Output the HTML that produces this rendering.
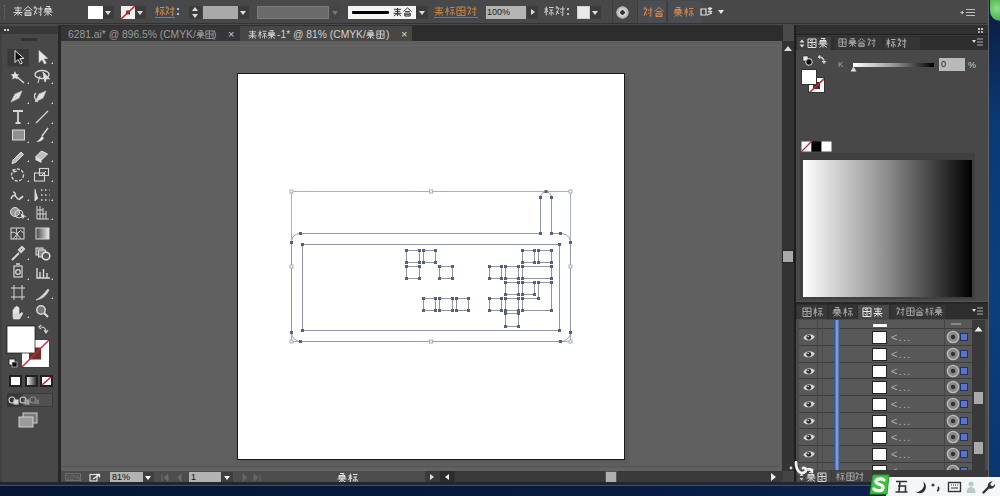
<!DOCTYPE html>
<html><head><meta charset="utf-8">
<style>
*{margin:0;padding:0;box-sizing:border-box}
html,body{width:1000px;height:496px;overflow:hidden;background:#4a4a4a;font-family:"Liberation Sans",sans-serif}
.a{position:absolute}
svg{display:block}
#top{left:0;top:0;width:987px;height:24px;background:#484848;border-bottom:1px solid #333}
#desk{left:988px;top:0;width:12px;height:496px;background:linear-gradient(90deg,#5d6570 0,#5d6570 1px,transparent 1px),linear-gradient(180deg,#0a1a3c 0,#0b2550 40px,#0a3a74 120px,#0b3f7c 300px,#0a3670 480px)}
#tools{left:0;top:25px;width:58px;height:459px;background:#484848;border-left:2px solid #404040}
#toolsep{left:58px;top:25px;width:3px;height:459px;background:#282828}
#tabs{left:61px;top:25px;width:722px;height:16px;background:#2f2f2f}
#canvas{left:61px;top:41px;width:721px;height:430px;background:#5f5f5f}
#vscroll{left:782px;top:41px;width:12px;height:430px;background:#333}
#rsep{left:794px;top:25px;width:2px;height:459px;background:#1f1f1f}
#rpanel{left:796px;top:25px;width:192px;height:459px;background:#535353}
#status{left:61px;top:471px;width:722px;height:13px;background:#3b3b3b}
#taskbar{left:0;top:484px;width:988px;height:12px;background:#0b1e3c}
#artboard{left:237px;top:73px;width:388px;height:387px;background:#fff;border:1px solid #1a1a1a;box-shadow:4px 3px 0 0 #5a5a5a}
.btn{background:#3c3c3c}
.tri{width:0;height:0;border-left:3px solid transparent;border-right:3px solid transparent;border-top:4px solid #ddd}
.txt{color:#cfcfcf;font-size:11px;line-height:12px;white-space:nowrap}
</style></head><body>
<svg width="0" height="0" style="position:absolute">
 <defs>
  <symbol id="g1" viewBox="0 0 10 10"><path d="M1 2h8M2 4.3h6M0.5 6.5h9M5 0.5v9M4.5 6.8L1 9.5M5.5 6.8L9 9.5" stroke="currentColor" stroke-width="1" fill="none"/></symbol>
  <symbol id="g2" viewBox="0 0 10 10"><path d="M0.5 3h3.5M2.3 0.5v9M2.2 3.5L0.5 7M2.5 4l1.5 2M5 1.5h4.5M5.5 4h3.5M7.2 4v5.5M6 6l-1 2.5M8.5 6l1 2.5" stroke="currentColor" stroke-width="1" fill="none"/></symbol>
  <symbol id="g3" viewBox="0 0 10 10"><path d="M5 0.5L0.5 4.5M5 0.5l4.5 4M2.5 4.5h5M2 6.2h6v3.3H2zM2 8h6" stroke="currentColor" stroke-width="1" fill="none"/></symbol>
  <symbol id="g4" viewBox="0 0 10 10"><path d="M0.5 2h3.5L1 9M1.5 5l2.5 3M5 3h4.5M7.8 0.5v9l-1.2-.8M5.5 5.5l1 1.5M1 0.5l2 1" stroke="currentColor" stroke-width="1" fill="none"/></symbol>
  <symbol id="g5" viewBox="0 0 10 10"><path d="M3 0.5h4L5.5 2M2 2.5h6v2.5H2zM0.5 6h9M5 5v4.5M1.5 9.5L4.5 7M5.5 7l3.5 2.5M2 3.7h6" stroke="currentColor" stroke-width="1" fill="none"/></symbol>
  <symbol id="g6" viewBox="0 0 10 10"><path d="M1 1h8v8.5H1zM1 4.5h8M5 1v8.5M3 2.5h1M6.5 6.5h1.5M2.5 7l1.5 1" stroke="currentColor" stroke-width="1" fill="none"/></symbol>
 </defs>
</svg>

<!-- ===== TOP CONTROL BAR ===== -->
<div id="top" class="a"></div>
<div id="desk" class="a"></div>
<div class="a" style="left:990px;top:0;width:10px;height:21px;border-radius:0 0 0 10px;background:radial-gradient(circle at 70% 40%,#8be08b,#3caa3c)"></div>
<div id="toparea" class="a" style="left:0;top:0;width:986px;height:24px">
 <div class="a" style="left:4px;top:5px;width:2px;height:14px;border-left:1px dotted #6a6a6a"></div>
 <div class="a" style="left:13px;top:6px;color:#d4d4d4;width:40px;height:10px">
  <svg class="a" style="left:0;top:0" width="10" height="10"><use href="#g1"/></svg>
  <svg class="a" style="left:10px;top:0" width="10" height="10"><use href="#g3"/></svg>
  <svg class="a" style="left:20px;top:0" width="10" height="10"><use href="#g4"/></svg>
  <svg class="a" style="left:30px;top:0" width="10" height="10"><use href="#g5"/></svg>
 </div>
 <!-- fill swatch -->
 <div class="a" style="left:88px;top:6px;width:15px;height:13px;background:#fff"></div>
 <div class="a btn" style="left:103px;top:6px;width:11px;height:13px"><div class="a tri" style="left:2px;top:5px"></div></div>
 <!-- stroke swatch -->
 <div class="a" style="left:121px;top:6px;width:14px;height:13px;background:#f5eeee;overflow:hidden">
  <svg width="14" height="13"><path d="M0 13L14 0" stroke="#c22" stroke-width="1.5"/><rect x="5" y="4.5" width="4" height="4" fill="#7a3a3a"/></svg>
 </div>
 <div class="a btn" style="left:135px;top:6px;width:11px;height:13px"><div class="a tri" style="left:2px;top:5px"></div></div>
 <!-- stroke label -->
 <div class="a" style="left:150px;top:1px;width:36px;height:22px;background:#45484d"></div>
 <div class="a" style="left:155px;top:6px;color:#d08a4a;width:30px;height:11px">
  <svg class="a" style="left:0;top:0" width="10" height="10"><use href="#g2"/></svg>
  <svg class="a" style="left:10px;top:0" width="10" height="10"><use href="#g4"/></svg>
  <div class="a" style="left:22px;top:2px;width:2px;height:2px;background:#bbb"></div>
  <div class="a" style="left:22px;top:7px;width:2px;height:2px;background:#bbb"></div>
  <div class="a" style="left:0;top:11px;width:20px;height:1px;background:#b07040"></div>
 </div>
 <div class="a btn" style="left:189px;top:6px;width:13px;height:13px">
  <div class="a" style="left:3px;top:1px;width:0;height:0;border-left:3px solid transparent;border-right:3px solid transparent;border-bottom:4px solid #ddd"></div>
  <div class="a" style="left:3px;top:8px;width:0;height:0;border-left:3px solid transparent;border-right:3px solid transparent;border-top:4px solid #ddd"></div>
 </div>
 <div class="a" style="left:203px;top:6px;width:35px;height:13px;background:#a9a9a9"></div>
 <div class="a btn" style="left:238px;top:6px;width:11px;height:13px"><div class="a tri" style="left:2px;top:5px"></div></div>
 <!-- disabled profile box -->
 <div class="a" style="left:257px;top:6px;width:72px;height:13px;background:#6a6a6a;border:1px solid #7a7a7a"></div>
 <div class="a" style="left:330px;top:6px;width:10px;height:13px;background:#444"><div class="a" style="left:2px;top:5px;width:0;height:0;border-left:3px solid transparent;border-right:3px solid transparent;border-top:4px solid #777"></div></div>
 <!-- stroke style -->
 <div class="a" style="left:348px;top:6px;width:68px;height:13px;background:#f4f4f4">
  <div class="a" style="left:4px;top:5px;width:37px;height:3px;background:#000;border-radius:1px"></div>
  <div class="a" style="left:45px;top:1px;color:#222;width:20px;height:10px">
   <svg class="a" style="left:0;top:0" width="9" height="10"><use href="#g1"/></svg>
   <svg class="a" style="left:10px;top:0" width="9" height="10"><use href="#g3"/></svg>
  </div>
 </div>
 <div class="a btn" style="left:416px;top:6px;width:12px;height:13px"><div class="a tri" style="left:3px;top:5px"></div></div>
 <!-- opacity -->
 <div class="a" style="left:431px;top:1px;width:50px;height:22px;background:#45484d"></div>
 <div class="a" style="left:434px;top:6px;color:#c9803e;width:48px;height:12px">
  <svg class="a" style="left:0;top:0" width="10" height="10"><use href="#g1"/></svg>
  <svg class="a" style="left:11px;top:0" width="10" height="10"><use href="#g2"/></svg>
  <svg class="a" style="left:22px;top:0" width="10" height="10"><use href="#g6"/></svg>
  <svg class="a" style="left:33px;top:0" width="10" height="10"><use href="#g4"/></svg>
  <div class="a" style="left:0;top:11px;width:44px;height:1px;background:#a86a3a"></div>
 </div>
 <div class="a" style="left:486px;top:6px;width:40px;height:13px;background:#b4b4b4;color:#222;font-size:9px;line-height:13px;padding-left:1px">100%</div>
 <div class="a btn" style="left:527px;top:6px;width:11px;height:13px"><div class="a" style="left:4px;top:3px;width:0;height:0;border-top:3.5px solid transparent;border-bottom:3.5px solid transparent;border-left:4px solid #ddd"></div></div>
 <div class="a" style="left:544px;top:6px;color:#cfcfcf;width:30px;height:10px">
  <svg class="a" style="left:0;top:0" width="10" height="10"><use href="#g2"/></svg>
  <svg class="a" style="left:11px;top:0" width="10" height="10"><use href="#g4"/></svg>
  <div class="a" style="left:23px;top:2px;width:2px;height:2px;background:#bbb"></div>
  <div class="a" style="left:23px;top:7px;width:2px;height:2px;background:#bbb"></div>
 </div>
 <div class="a" style="left:577px;top:6px;width:13px;height:13px;background:#e8e8e8;border:1px solid #cfcfcf"></div>
 <div class="a btn" style="left:590px;top:6px;width:11px;height:13px"><div class="a tri" style="left:2px;top:5px"></div></div>
 <!-- globe -->
 <div class="a" style="left:616px;top:6px;width:13px;height:13px;border-radius:50%;background:radial-gradient(circle at 50% 50%,#333 0,#333 2px,#ddd 2.5px,#aaa 6px,#555 6.5px)"></div>
 <div class="a" style="left:612px;top:1px;width:1px;height:22px;background:#3c3c3c"></div><div class="a" style="left:637px;top:1px;width:1px;height:22px;background:#3c3c3c"></div><div class="a" style="left:638px;top:1px;width:28px;height:22px;background:#4a4d52"></div>
 <div class="a" style="left:666px;top:1px;width:2px;height:22px;background:#3e3e3e"></div><div class="a" style="left:668px;top:1px;width:34px;height:22px;background:#4a4d52"></div>
 <div class="a" style="left:643px;top:7px;color:#d4874a;width:22px;height:10px">
  <svg class="a" style="left:0;top:0" width="10" height="10"><use href="#g4"/></svg>
  <svg class="a" style="left:11px;top:0" width="10" height="10"><use href="#g3"/></svg>
 </div>
 <div class="a" style="left:673px;top:7px;color:#d4874a;width:22px;height:10px">
  <svg class="a" style="left:0;top:0" width="10" height="10"><use href="#g5"/></svg>
  <svg class="a" style="left:11px;top:0" width="10" height="10"><use href="#g2"/></svg>
 </div>
 <svg class="a" style="left:700px;top:6px" width="14" height="12"><path d="M1 3h5v6H1zM8 2l4 4M12 2l-4 4M10 1v6M7 9l5-2" stroke="#e0e0e0" stroke-width="1.2" fill="none"/></svg>
 <div class="a tri" style="left:718px;top:10px;border-top-color:#e6e6e6"></div>
 <!-- panel menu icon -->
 <svg class="a" style="left:960px;top:8px" width="16" height="9"><path d="M1 4.5h3M6 1.5h9M6 4.5h9M6 7.5h9" stroke="#bdbdbd" stroke-width="1"/><path d="M0 4.5l3-2v4z" fill="#bdbdbd"/></svg>
</div>

<!-- ===== TOOLS ===== -->
<div id="tools" class="a"></div>
<div id="toolsep" class="a"></div>
<svg class="a" style="left:0;top:25px" width="58" height="459" viewBox="0 25 58 459">
 <rect x="0" y="26" width="58" height="8" fill="#383838"/>
 <path d="M4 30h2M7 30h2" stroke="#cfcfcf" stroke-width="2"/>
 <rect x="21" y="38" width="16" height="3" fill="#333"/>
 <g fill="none" stroke="#d6d6d6" stroke-width="1.2">
 <!-- row1 -->
 <rect x="7.5" y="49" width="21.5" height="17.5" fill="#393939" stroke="none"/>
 <path d="M15 50.5v12l3-3 2.5 4.5 1.8-1-2.5-4.3 4-.3z" fill="#111" stroke="#e6e6e6" stroke-width="1"/>
 <path d="M39 50.5v12l3-3 2.5 4.5 1.8-1-2.5-4.3 4-.3z" fill="#e8e8e8" stroke="#cfcfcf" stroke-width=".6"/>
 <!-- row2 wand / lasso -->
 <path d="M16 76l8 7" stroke-width="1.6"/>
 <path d="M15 71l1.2 3 3 .5-2.2 2 .6 3-2.6-1.5-2.7 1.5.6-3-2.2-2 3-.5z" fill="#e0e0e0" stroke="none"/>
 <ellipse cx="42" cy="74.5" rx="7" ry="4" stroke-width="1.4"/>
 <path d="M40 76l-2 7M43 72l2 10 1.5-3.5 3 .5z" fill="#ddd" stroke-width="1"/>
 <!-- row3 pen -->
 <path d="M11 102l4-8 7-3-3 7-8 4zM15 98l2-2" fill="#e0e0e0" stroke="#bdbdbd" stroke-width=".8"/>
 <path d="M35 102l4-8 7-3-3 7-8 4z" fill="#e0e0e0" stroke="#bdbdbd" stroke-width=".8"/>
 <path d="M36 93c-3 2-1 8 2 9" stroke-width="1.2"/>
 <!-- row4 T / line -->
 <path d="M13 111h10M18 111v12M15.5 123h5" stroke-width="1.8"/>
 <path d="M36 123l12-12" stroke-width="1.2"/>
 <!-- row5 rect / brush -->
 <rect x="12.5" y="130" width="12" height="10" fill="#8f8f8f" stroke="#d8d8d8" stroke-width="1"/>
 <path d="M48 128l-6 8" stroke-width="1.4"/>
 <path d="M36 142c2-1 4-3 6-6l2 2c-2 3-5 4-8 4z" fill="#e6e6e6" stroke="none"/>
 <!-- row6 pencil / eraser -->
 <path d="M13 160l8-8 2.5 2.5-8 8-3.5 1z" fill="#bbb" stroke="#e0e0e0" stroke-width="1"/>
 <path d="M35.5 157l6-6 6 3-6 6z" fill="#bdbdbd" stroke="#e6e6e6" stroke-width="1"/>
 <path d="M35.5 157v3l6 3v-3z" fill="#e0e0e0" stroke="none"/>
 <!-- row7 rotate / scale -->
 <circle cx="17.5" cy="175" r="6" stroke-width="1.3" stroke-dasharray="3 1.5"/>
 <path d="M13 169l1 3 3-1" stroke-width="1.2"/>
 <rect x="34.5" y="173" width="10" height="8" stroke-width="1.1"/>
 <rect x="39.5" y="168.5" width="9" height="7" stroke-width="1.1"/>
 <path d="M42 175l4-4" stroke-width="1"/>
 <!-- row8 warp / free transform -->
 <path d="M11 199c2-6 5-3 6-1s3 2 6-2M13 192c2 0 3 2 2 4M19 200c1-2 3-3 4-3" stroke-width="1.5"/>
 <path d="M35 189v12l3-3" fill="#ddd" stroke-width="1"/>
 <path d="M41 190h1.5M45 190h1.5M49 190h.5M41 195h1.5M45 195h1.5M49 195h.5M41 200h1.5M45 200h1.5M49 200h.5" stroke-width="1.6"/>
 <!-- row9 shape builder / perspective -->
 <circle cx="15" cy="212" r="4.5" fill="#999" stroke="#ddd" stroke-width="1"/>
 <circle cx="19" cy="214" r="4" stroke-width="1"/>
 <path d="M20 213l3 6 1.5-2.5 2.5.5z" fill="#ddd" stroke="none"/>
 <path d="M37 206v13h12M40 206v13M43 208v11M46 211v8M37 210h6M37 214h9" stroke-width="1"/>
 <!-- row10 mesh / gradient -->
 <rect x="11" y="228" width="13" height="11" stroke-width="1"/>
 <path d="M11 233c3-3 5 3 8-1s3 2 5 1M17 228c-2 3 2 6-1 11M13 239l4-5 4 5" stroke-width="1"/>
 <defs><linearGradient id="tg1" x1="0" x2="1"><stop offset="0" stop-color="#444"/><stop offset="1" stop-color="#eee"/></linearGradient></defs>
 <rect x="36" y="228" width="13" height="11" fill="url(#tg1)" stroke="#d6d6d6" stroke-width="1"/>
 <!-- row11 eyedropper / blend -->
 <path d="M12 260l7-7M19 250l3-3 2 2-3 3z" stroke-width="2"/>
 <rect x="36" y="248" width="7" height="7" fill="#777" stroke="#ddd" stroke-width="1"/>
 <rect x="38.5" y="250" width="7" height="7" fill="#888" stroke="#ddd" stroke-width="1"/>
 <circle cx="46" cy="256" r="3.8" fill="#555" stroke="#e6e6e6" stroke-width="1.5"/>
 <!-- row12 symbol sprayer / graph -->
 <rect x="14" y="266" width="8" height="11" stroke-width="1.2"/>
 <circle cx="18" cy="272" r="2.3" stroke-width="1.2"/>
 <path d="M16 264h4" stroke-width="1.5"/>
 <path d="M37 268v10h13M40 278v-6M43.5 278v-9M47 278v-5" stroke-width="1.4"/>
 <!-- row13 artboard / slice -->
 <path d="M11 288h14M11 297h14M14 285v15M22 285v15" stroke-width="1"/>
 <path d="M36 300c4-2 8-6 12-11l1 1c-3 6-7 9-13 10z" fill="#ddd" stroke="#ccc" stroke-width=".8"/>
 <!-- row14 hand / zoom -->
 <path d="M13 316v-6c0-1 1.5-1 1.5 0v3-5c0-1 1.5-1 1.5 0v5-6c0-1 1.5-1 1.5 0v6-5c0-1 1.5-1 1.5 0v7l2-2c1-1 2 0 1.5 1l-3 5h-6z" fill="#d6d6d6" stroke="#eee" stroke-width=".6"/>
 <circle cx="41" cy="310" r="4.2" fill="#777" stroke="#d6d6d6" stroke-width="1.5"/>
 <path d="M44 313l4 4" stroke-width="2.2"/>
 </g>
 <!-- flyout indicators -->
 <g fill="#cfcfcf">
  <path d="M51 64l2-2v2z"/><path d="M27 84l2-2v2z"/><path d="M51 84l2-2v2z"/>
  <path d="M27 104l2-2v2z"/><path d="M51 104l2-2v2z"/>
  <path d="M27 124l2-2v2z"/><path d="M51 124l2-2v2z"/>
  <path d="M27 143l2-2v2z"/><path d="M51 143l2-2v2z"/>
  <path d="M27 162l2-2v2z"/><path d="M51 162l2-2v2z"/>
  <path d="M27 182l2-2v2z"/><path d="M51 182l2-2v2z"/>
  <path d="M27 201l2-2v2z"/><path d="M51 201l2-2v2z"/>
  <path d="M27 220l2-2v2z"/><path d="M51 220l2-2v2z"/>
  <path d="M27 260l2-2v2z"/>
  <path d="M27 280l2-2v2z"/><path d="M51 280l2-2v2z"/>
  <path d="M51 299l2-2v2z"/>
  <path d="M27 318l2-2v2z"/>
 </g>
 <!-- fill / stroke -->
 <rect x="7" y="326" width="28" height="27" fill="#fff" stroke="#2a2a2a" stroke-width=".8"/>
 <rect x="21.5" y="339.5" width="28" height="28" fill="#fff" stroke="#2a2a2a" stroke-width=".8"/>
 <rect x="29" y="347.5" width="12" height="12" fill="#6e2e2a"/>
 <path d="M22 367l27-27" stroke="#c8283a" stroke-width="1.5"/>
 <rect x="7" y="326" width="28" height="27" fill="#fff" stroke="#2a2a2a" stroke-width=".8"/>
 <path d="M41 327c3 0 5 2 5 5M44 330l2 3 2-3M41 325l-2 2 2 2" stroke="#d6d6d6" stroke-width="1.1" fill="none"/>
 <rect x="9" y="359" width="6" height="6" fill="#eee" stroke="#222" stroke-width=".8"/>
 <rect x="12" y="362" width="5" height="5" fill="#111" stroke="#ddd" stroke-width=".6"/>
 <!-- modes -->
 <rect x="9" y="375" width="13" height="12" fill="#222"/>
 <rect x="11" y="377" width="9" height="8" fill="#fff"/>
 <rect x="25" y="375" width="13" height="12" fill="#222"/>
 <defs><linearGradient id="tg2" x1="0" x2="1"><stop offset="0" stop-color="#f0f0f0"/><stop offset="1" stop-color="#333"/></linearGradient></defs><rect x="27" y="377" width="9" height="8" fill="url(#tg2)"/>
 <rect x="40" y="375" width="13" height="12" fill="#222"/>
 <rect x="42" y="377" width="9" height="8" fill="#fff"/>
 <path d="M42 385l9-8" stroke="#d0283a" stroke-width="1.6"/>
 <rect x="7" y="393" width="46" height="14" fill="#3a3a3a"/><rect x="23" y="394" width="29" height="12" fill="#505050"/>
 <rect x="7" y="394" width="9" height="13" fill="#353535"/>
 <g fill="none" stroke="#cfcfcf" stroke-width="1.1">
  <circle cx="12" cy="400" r="3"/><rect x="14" y="400" width="4" height="4" fill="#ddd"/>
  <circle cx="23" cy="400" r="3"/><rect x="25" y="400" width="4" height="4" fill="#999" stroke="#aaa"/>
  <circle cx="33" cy="400" r="3" stroke="#888"/><rect x="35" y="400" width="3.5" height="3.5" fill="#777" stroke="#777"/>
 </g>
 <rect x="23" y="413" width="14" height="10" fill="#7a7a7a" stroke="#cfcfcf" stroke-width="1"/>
 <rect x="19" y="417" width="14" height="10" fill="#9a9a9a" stroke="#cfcfcf" stroke-width="1"/>
</svg>

<div id="tabs" class="a"></div>

<div class="a" style="left:61px;top:26px;width:179px;height:15px;background:#363636"></div>
<div class="a" style="left:240px;top:26px;width:172px;height:15px;background:#474747"></div>
<div class="a" style="left:412px;top:26px;width:371px;height:15px;background:#2d2d2d"></div>
<div class="a txt" style="left:68px;top:29px;color:#9a9a9a;font-size:10.3px">6281.ai* @ 896.5% (CMYK/</div>
<div class="a" style="left:196px;top:30px;color:#9a9a9a;width:20px;height:9px">
 <svg class="a" style="left:0;top:0" width="9" height="9"><use href="#g5"/></svg>
 <svg class="a" style="left:9px;top:0" width="9" height="9"><use href="#g6"/></svg>
</div>
<div class="a txt" style="left:213px;top:29px;color:#9a9a9a;font-size:10.3px">)</div>
<div class="a" style="left:228px;top:28px;color:#ccc;font-size:11px;line-height:12px">&#215;</div>
<div class="a" style="left:248px;top:30px;color:#d0d0d0;width:30px;height:9px">
 <svg class="a" style="left:0;top:0" width="9" height="9"><use href="#g1"/></svg>
 <svg class="a" style="left:9.5px;top:0" width="9" height="9"><use href="#g2"/></svg>
 <svg class="a" style="left:19px;top:0" width="9" height="9"><use href="#g5"/></svg>
</div>
<div class="a txt" style="left:277px;top:29px;color:#d0d0d0;font-size:10.3px">-1* @ 81% (CMYK/</div>
<div class="a" style="left:366px;top:30px;color:#d0d0d0;width:20px;height:9px">
 <svg class="a" style="left:0;top:0" width="9" height="9"><use href="#g5"/></svg>
 <svg class="a" style="left:10px;top:0" width="9" height="9"><use href="#g6"/></svg>
</div>
<div class="a txt" style="left:386px;top:29px;color:#d0d0d0;font-size:10.3px">)</div>
<div class="a" style="left:401px;top:28px;color:#ddd;font-size:11px;line-height:12px">&#215;</div>
<div id="canvas" class="a"></div>
<div class="a" style="left:61px;top:45px;width:718px;height:1px;background:#666"></div><div class="a" style="left:62px;top:45px;width:1px;height:424px;background:#666"></div><div class="a" style="left:778px;top:45px;width:1px;height:424px;background:#666"></div><div class="a" style="left:61px;top:469px;width:718px;height:1px;background:#656565"></div><div class="a" style="left:61px;top:466px;width:718px;height:1px;background:#555"></div>
<div id="artboard" class="a"></div>
<svg class="a" style="left:238px;top:74px" width="386" height="385" viewBox="238 74 386 385">
<path d="M291.5 191.5H570.5V341.5H291.5Z" fill="none" stroke="#a9b0c2" stroke-width="1"/>
<path d="M300.5 233.5H540.5V197.5C540.5 190 551.5 190 551.5 197.5V233.5H560.5C566 233.5 570.5 237 570.5 242.5V332.5C570.5 337 566 341.5 560.5 341.5H300.5C296 341.5 291.5 337 291.5 332.5V242.5C291.5 237 295 233.5 300.5 233.5Z" fill="none" stroke="#939aab" stroke-width="1"/>
<path d="M406.5 250.5H419.5V262.5H406.5ZM423.5 250.5H435.5V262.5H423.5ZM406.5 266.5H419.5V278.5H406.5ZM439.5 266.5H452.5V278.5H439.5ZM423.5 298.5H435.5V310.5H423.5ZM439.5 298.5H452.5V310.5H439.5ZM456.5 298.5H468.5V310.5H456.5ZM522.5 250.5H534.5V262.5H522.5ZM538.5 250.5H551.5V262.5H538.5ZM489.5 266.5H501.5V278.5H489.5ZM505.5 266.5H518.5V278.5H505.5ZM522.5 266.5H551.5V278.5H522.5ZM505.5 282.5H518.5V294.5H505.5ZM522.5 282.5H534.5V294.5H522.5ZM489.5 298.5H501.5V310.5H489.5ZM505.5 298.5H518.5V310.5H505.5ZM505.5 313.5H518.5V326.5H505.5ZM538.5 282.5H551.5V310.5H522.5V298.5H538.5ZM302.5 244.5H559.5V330.5H302.5Z" fill="none" stroke="#8e95a5" stroke-width="1"/>
<g fill="#55627a"><rect x="405.0" y="249.0" width="3" height="3"/><rect x="418.0" y="249.0" width="3" height="3"/><rect x="405.0" y="261.0" width="3" height="3"/><rect x="418.0" y="261.0" width="3" height="3"/><rect x="422.0" y="249.0" width="3" height="3"/><rect x="434.0" y="249.0" width="3" height="3"/><rect x="422.0" y="261.0" width="3" height="3"/><rect x="434.0" y="261.0" width="3" height="3"/><rect x="405.0" y="265.0" width="3" height="3"/><rect x="418.0" y="265.0" width="3" height="3"/><rect x="405.0" y="277.0" width="3" height="3"/><rect x="418.0" y="277.0" width="3" height="3"/><rect x="438.0" y="265.0" width="3" height="3"/><rect x="451.0" y="265.0" width="3" height="3"/><rect x="438.0" y="277.0" width="3" height="3"/><rect x="451.0" y="277.0" width="3" height="3"/><rect x="422.0" y="297.0" width="3" height="3"/><rect x="434.0" y="297.0" width="3" height="3"/><rect x="422.0" y="309.0" width="3" height="3"/><rect x="434.0" y="309.0" width="3" height="3"/><rect x="438.0" y="297.0" width="3" height="3"/><rect x="451.0" y="297.0" width="3" height="3"/><rect x="438.0" y="309.0" width="3" height="3"/><rect x="451.0" y="309.0" width="3" height="3"/><rect x="455.0" y="297.0" width="3" height="3"/><rect x="467.0" y="297.0" width="3" height="3"/><rect x="455.0" y="309.0" width="3" height="3"/><rect x="467.0" y="309.0" width="3" height="3"/><rect x="521.0" y="249.0" width="3" height="3"/><rect x="533.0" y="249.0" width="3" height="3"/><rect x="521.0" y="261.0" width="3" height="3"/><rect x="533.0" y="261.0" width="3" height="3"/><rect x="537.0" y="249.0" width="3" height="3"/><rect x="550.0" y="249.0" width="3" height="3"/><rect x="537.0" y="261.0" width="3" height="3"/><rect x="550.0" y="261.0" width="3" height="3"/><rect x="488.0" y="265.0" width="3" height="3"/><rect x="500.0" y="265.0" width="3" height="3"/><rect x="488.0" y="277.0" width="3" height="3"/><rect x="500.0" y="277.0" width="3" height="3"/><rect x="504.0" y="265.0" width="3" height="3"/><rect x="517.0" y="265.0" width="3" height="3"/><rect x="504.0" y="277.0" width="3" height="3"/><rect x="517.0" y="277.0" width="3" height="3"/><rect x="521.0" y="265.0" width="3" height="3"/><rect x="550.0" y="265.0" width="3" height="3"/><rect x="521.0" y="277.0" width="3" height="3"/><rect x="550.0" y="277.0" width="3" height="3"/><rect x="504.0" y="281.0" width="3" height="3"/><rect x="517.0" y="281.0" width="3" height="3"/><rect x="504.0" y="293.0" width="3" height="3"/><rect x="517.0" y="293.0" width="3" height="3"/><rect x="521.0" y="281.0" width="3" height="3"/><rect x="533.0" y="281.0" width="3" height="3"/><rect x="521.0" y="293.0" width="3" height="3"/><rect x="533.0" y="293.0" width="3" height="3"/><rect x="488.0" y="297.0" width="3" height="3"/><rect x="500.0" y="297.0" width="3" height="3"/><rect x="488.0" y="309.0" width="3" height="3"/><rect x="500.0" y="309.0" width="3" height="3"/><rect x="504.0" y="297.0" width="3" height="3"/><rect x="517.0" y="297.0" width="3" height="3"/><rect x="504.0" y="309.0" width="3" height="3"/><rect x="517.0" y="309.0" width="3" height="3"/><rect x="504.0" y="312.0" width="3" height="3"/><rect x="517.0" y="312.0" width="3" height="3"/><rect x="504.0" y="325.0" width="3" height="3"/><rect x="517.0" y="325.0" width="3" height="3"/><rect x="537.0" y="281.0" width="3" height="3"/><rect x="550.0" y="281.0" width="3" height="3"/><rect x="550.0" y="309.0" width="3" height="3"/><rect x="521.0" y="309.0" width="3" height="3"/><rect x="521.0" y="297.0" width="3" height="3"/><rect x="537.0" y="297.0" width="3" height="3"/><rect x="301.0" y="243.0" width="3" height="3"/><rect x="558.0" y="243.0" width="3" height="3"/><rect x="301.0" y="329.0" width="3" height="3"/><rect x="558.0" y="329.0" width="3" height="3"/><rect x="299.0" y="232.0" width="3" height="3"/><rect x="539.0" y="232.0" width="3" height="3"/><rect x="539.0" y="196.0" width="3" height="3"/><rect x="544.5" y="190.0" width="3" height="3"/><rect x="550.0" y="196.0" width="3" height="3"/><rect x="550.0" y="232.0" width="3" height="3"/><rect x="559.0" y="232.0" width="3" height="3"/><rect x="569.0" y="241.0" width="3" height="3"/><rect x="569.0" y="331.0" width="3" height="3"/><rect x="559.0" y="340.0" width="3" height="3"/><rect x="299.0" y="340.0" width="3" height="3"/><rect x="290.0" y="331.0" width="3" height="3"/><rect x="290.0" y="241.0" width="3" height="3"/></g>
<g fill="#fff" stroke="#a6aec2" stroke-width="1"><rect x="290.0" y="190.0" width="3" height="3"/><rect x="429.5" y="190.0" width="3" height="3"/><rect x="569.0" y="190.0" width="3" height="3"/><rect x="290.0" y="265.0" width="3" height="3"/><rect x="569.0" y="265.0" width="3" height="3"/><rect x="290.0" y="340.0" width="3" height="3"/><rect x="429.5" y="340.0" width="3" height="3"/><rect x="569.0" y="340.0" width="3" height="3"/></g>
</svg>
<div id="vscroll" class="a"></div>
<div id="rsep" class="a"></div>
<div id="rpanel" class="a"></div>
<div class="a" style="left:796px;top:25px;width:192px;height:9px;background:#303030"></div><div class="a" style="left:796px;top:34px;width:192px;height:1px;background:#202020"></div><div class="a" style="left:796px;top:35px;width:192px;height:1px;background:#3a3a3a"></div>
<div class="a" style="left:978px;top:28px;width:2px;height:2px;background:#ccc;box-shadow:3px 0 #ccc,0 3px #aaa,3px 3px #aaa"></div>
<div class="a" style="left:796px;top:36px;width:192px;height:14px;background:#2e2e2e"></div>
<div class="a" style="left:797px;top:37px;width:34px;height:13px;background:#3f3f3f"></div>
<div class="a" style="left:834px;top:37px;width:48px;height:13px;background:#353535"></div>
<div class="a" style="left:884px;top:37px;width:36px;height:13px;background:#353535"></div>
<svg class="a" style="left:799px;top:39px" width="6" height="9"><path d="M3 0.5L5.5 3.5H0.5zM3 8.5L5.5 5.5H0.5z" fill="#ddd"/></svg>
<div class="a" style="left:807px;top:38px;color:#e0e0e0;width:22px;height:10px"><svg class="a" style="left:0px;top:0" width="10" height="10"><use href="#g6"/></svg><svg class="a" style="left:11px;top:0" width="10" height="10"><use href="#g5"/></svg></div>

<div class="a" style="left:838px;top:38px;color:#a8a8a8;width:44px;height:10px"><svg class="a" style="left:0.0px;top:0" width="9" height="9"><use href="#g6"/></svg><svg class="a" style="left:9.5px;top:0" width="9" height="9"><use href="#g5"/></svg><svg class="a" style="left:19.0px;top:0" width="9" height="9"><use href="#g3"/></svg><svg class="a" style="left:28.5px;top:0" width="9" height="9"><use href="#g4"/></svg></div>

<div class="a" style="left:886px;top:38px;color:#b4b4b4;width:22px;height:10px"><svg class="a" style="left:0px;top:0" width="10" height="10"><use href="#g2"/></svg><svg class="a" style="left:11px;top:0" width="10" height="10"><use href="#g4"/></svg></div>

<svg class="a" style="left:972px;top:38px" width="12" height="9"><path d="M0 2h4L2 5z" fill="#ddd"/><path d="M5 1h6M5 4h6M5 7h6" stroke="#aaa" stroke-width="1.2"/></svg>
<div class="a" style="left:796px;top:50px;width:192px;height:251px;background:#484848"></div>
<svg class="a" style="left:802px;top:55px" width="26" height="11"><rect x="1" y="1" width="5" height="5" fill="#eee" stroke="#222" stroke-width=".6"/><circle cx="7" cy="7" r="3.3" fill="#111" stroke="#ddd" stroke-width="1"/><path d="M16 2l2-1.5v3zM18 2c3 0 4 2 4 4M20 6l2 2.5 2-2.5" stroke="#cfcfcf" stroke-width="1" fill="#cfcfcf"/></svg>
<div class="a" style="left:808px;top:77px;width:17px;height:16px;background:#fff;border:1px solid #333;overflow:hidden"><div class="a" style="left:4px;top:4px;width:7px;height:7px;background:#5a2626"></div><svg class="a" style="left:0;top:0" width="16" height="15"><path d="M0 15L16 0" stroke="#c2283a" stroke-width="1.6"/></svg></div>
<div class="a" style="left:801px;top:69px;width:16px;height:16px;background:#fff;border:1px solid #333"></div>
<div class="a" style="left:838px;top:61px;color:#aaa;font-size:8px;line-height:8px">K</div>
<div class="a" style="left:853px;top:63px;width:81px;height:4px;background:linear-gradient(90deg,#fff,#999 50%,#000)"></div>
<svg class="a" style="left:850px;top:66px" width="7" height="6"><path d="M3.5 0.5L6.5 5.5H0.5z" fill="#ddd"/></svg>
<div class="a" style="left:939px;top:58px;width:26px;height:13px;background:#b9b9b9;color:#222;font-size:9px;line-height:13px;padding-left:2px">0</div>
<div class="a" style="left:968px;top:61px;color:#ccc;font-size:9px;line-height:9px">%</div>
<svg class="a" style="left:801px;top:141px" width="31" height="11"><rect x="0.5" y="0.5" width="10" height="10" fill="#fff"/><path d="M0.5 10.5L10.5 0.5" stroke="#c2283a" stroke-width="1.2"/><rect x="10.5" y="0.5" width="10" height="10" fill="#000"/><rect x="20.5" y="0.5" width="10" height="10" fill="#fff"/></svg>
<div class="a" style="left:800px;top:153px;width:175px;height:146px;background:#3f3f3f;border-radius:2px"></div>
<div class="a" style="left:803px;top:160px;width:169px;height:137px;background:linear-gradient(90deg,#fff 0%,#f6f6f6 4%,#8c8c8c 50%,#484848 75%,#000 100%)"></div>
<div class="a" style="left:796px;top:302px;width:192px;height:2px;background:#262626"></div>
<div class="a" style="left:796px;top:304px;width:192px;height:15px;background:#2e2e2e"></div><div class="a" style="left:797px;top:305px;width:30px;height:14px;background:#383838"></div>
<div class="a" style="left:829px;top:305px;width:28px;height:14px;background:#333"></div>
<div class="a" style="left:858px;top:305px;width:31px;height:14px;background:#484848"></div>
<div class="a" style="left:891px;top:305px;width:55px;height:14px;background:#353535"></div>
<div class="a" style="left:802px;top:307px;color:#a8a8a8;width:22px;height:10px"><svg class="a" style="left:0px;top:0" width="10" height="10"><use href="#g6"/></svg><svg class="a" style="left:11px;top:0" width="10" height="10"><use href="#g2"/></svg></div>

<div class="a" style="left:832px;top:307px;color:#a8a8a8;width:22px;height:10px"><svg class="a" style="left:0px;top:0" width="10" height="10"><use href="#g5"/></svg><svg class="a" style="left:11px;top:0" width="10" height="10"><use href="#g2"/></svg></div>

<div class="a" style="left:862px;top:307px;color:#e6e6e6;width:22px;height:10px"><svg class="a" style="left:0px;top:0" width="10" height="10"><use href="#g6"/></svg><svg class="a" style="left:11px;top:0" width="10" height="10"><use href="#g1"/></svg></div>

<div class="a" style="left:896px;top:307px;color:#a8a8a8;width:55px;height:10px"><svg class="a" style="left:0.0px;top:0" width="9" height="9"><use href="#g4"/></svg><svg class="a" style="left:9.5px;top:0" width="9" height="9"><use href="#g6"/></svg><svg class="a" style="left:19.0px;top:0" width="9" height="9"><use href="#g3"/></svg><svg class="a" style="left:28.5px;top:0" width="9" height="9"><use href="#g2"/></svg><svg class="a" style="left:38.0px;top:0" width="9" height="9"><use href="#g5"/></svg></div>

<svg class="a" style="left:972px;top:307px" width="12" height="9"><path d="M0 2h4L2 5z" fill="#ddd"/><path d="M5 1h6M5 4h6M5 7h6" stroke="#aaa" stroke-width="1.2"/></svg>
<div class="a" style="left:796px;top:319px;width:192px;height:152px;background:#4a4a4a"></div>
<div class="a" style="left:799px;top:320px;width:173px;height:150px;background:#585858"></div>
<div class="a" style="left:873px;top:324px;width:14px;height:3px;background:#fff"></div>
<svg class="a" style="left:950px;top:321px" width="12" height="5"><path d="M1 3h10" stroke="#bbb" stroke-width="1"/></svg>
<div class="a" style="left:799px;top:328px;width:173px;height:1px;background:#3d3d3d"></div>
<svg class="a" style="left:802px;top:332px" width="14" height="11"><path d="M1 6C2.5 1.5 10.5 .5 13 4.5C11.5 9.5 3 10 1 6z" fill="#d8d8d8" stroke="#555" stroke-width=".7"/><circle cx="6.8" cy="5.3" r="2.4" fill="#2a2a2a"/><circle cx="6.2" cy="4.6" r=".8" fill="#ccc"/></svg>
<div class="a" style="left:872px;top:331px;width:15px;height:13px;background:#fff;border:1px solid #222"></div>
<div class="a" style="left:891px;top:331px;color:#b0b0b0;font-size:11px;line-height:12px;letter-spacing:1.2px">&lt;...</div>
<svg class="a" style="left:946px;top:330px" width="14" height="14"><circle cx="7" cy="7" r="5.6" fill="#888" stroke="#bbb" stroke-width="1.4"/><circle cx="7" cy="7" r="2.2" fill="#333"/></svg>
<div class="a" style="left:960px;top:333px;width:8px;height:8px;background:#5b73c8;border:1.5px solid #20306a"></div>
<div class="a" style="left:799px;top:345px;width:173px;height:1px;background:#3d3d3d"></div>
<svg class="a" style="left:802px;top:349px" width="14" height="11"><path d="M1 6C2.5 1.5 10.5 .5 13 4.5C11.5 9.5 3 10 1 6z" fill="#d8d8d8" stroke="#555" stroke-width=".7"/><circle cx="6.8" cy="5.3" r="2.4" fill="#2a2a2a"/><circle cx="6.2" cy="4.6" r=".8" fill="#ccc"/></svg>
<div class="a" style="left:872px;top:348px;width:15px;height:13px;background:#fff;border:1px solid #222"></div>
<div class="a" style="left:891px;top:348px;color:#b0b0b0;font-size:11px;line-height:12px;letter-spacing:1.2px">&lt;...</div>
<svg class="a" style="left:946px;top:347px" width="14" height="14"><circle cx="7" cy="7" r="5.6" fill="#888" stroke="#bbb" stroke-width="1.4"/><circle cx="7" cy="7" r="2.2" fill="#333"/></svg>
<div class="a" style="left:960px;top:350px;width:8px;height:8px;background:#5b73c8;border:1.5px solid #20306a"></div>
<div class="a" style="left:799px;top:362px;width:173px;height:1px;background:#3d3d3d"></div>
<svg class="a" style="left:802px;top:366px" width="14" height="11"><path d="M1 6C2.5 1.5 10.5 .5 13 4.5C11.5 9.5 3 10 1 6z" fill="#d8d8d8" stroke="#555" stroke-width=".7"/><circle cx="6.8" cy="5.3" r="2.4" fill="#2a2a2a"/><circle cx="6.2" cy="4.6" r=".8" fill="#ccc"/></svg>
<div class="a" style="left:872px;top:365px;width:15px;height:13px;background:#fff;border:1px solid #222"></div>
<div class="a" style="left:891px;top:365px;color:#b0b0b0;font-size:11px;line-height:12px;letter-spacing:1.2px">&lt;...</div>
<svg class="a" style="left:946px;top:364px" width="14" height="14"><circle cx="7" cy="7" r="5.6" fill="#888" stroke="#bbb" stroke-width="1.4"/><circle cx="7" cy="7" r="2.2" fill="#333"/></svg>
<div class="a" style="left:960px;top:367px;width:8px;height:8px;background:#5b73c8;border:1.5px solid #20306a"></div>
<div class="a" style="left:799px;top:378px;width:173px;height:1px;background:#3d3d3d"></div>
<svg class="a" style="left:802px;top:382px" width="14" height="11"><path d="M1 6C2.5 1.5 10.5 .5 13 4.5C11.5 9.5 3 10 1 6z" fill="#d8d8d8" stroke="#555" stroke-width=".7"/><circle cx="6.8" cy="5.3" r="2.4" fill="#2a2a2a"/><circle cx="6.2" cy="4.6" r=".8" fill="#ccc"/></svg>
<div class="a" style="left:872px;top:381px;width:15px;height:13px;background:#fff;border:1px solid #222"></div>
<div class="a" style="left:891px;top:381px;color:#b0b0b0;font-size:11px;line-height:12px;letter-spacing:1.2px">&lt;...</div>
<svg class="a" style="left:946px;top:380px" width="14" height="14"><circle cx="7" cy="7" r="5.6" fill="#888" stroke="#bbb" stroke-width="1.4"/><circle cx="7" cy="7" r="2.2" fill="#333"/></svg>
<div class="a" style="left:960px;top:383px;width:8px;height:8px;background:#5b73c8;border:1.5px solid #20306a"></div>
<div class="a" style="left:799px;top:395px;width:173px;height:1px;background:#3d3d3d"></div>
<svg class="a" style="left:802px;top:399px" width="14" height="11"><path d="M1 6C2.5 1.5 10.5 .5 13 4.5C11.5 9.5 3 10 1 6z" fill="#d8d8d8" stroke="#555" stroke-width=".7"/><circle cx="6.8" cy="5.3" r="2.4" fill="#2a2a2a"/><circle cx="6.2" cy="4.6" r=".8" fill="#ccc"/></svg>
<div class="a" style="left:872px;top:398px;width:15px;height:13px;background:#fff;border:1px solid #222"></div>
<div class="a" style="left:891px;top:398px;color:#b0b0b0;font-size:11px;line-height:12px;letter-spacing:1.2px">&lt;...</div>
<svg class="a" style="left:946px;top:397px" width="14" height="14"><circle cx="7" cy="7" r="5.6" fill="#888" stroke="#bbb" stroke-width="1.4"/><circle cx="7" cy="7" r="2.2" fill="#333"/></svg>
<div class="a" style="left:960px;top:400px;width:8px;height:8px;background:#5b73c8;border:1.5px solid #20306a"></div>
<div class="a" style="left:799px;top:412px;width:173px;height:1px;background:#3d3d3d"></div>
<svg class="a" style="left:802px;top:416px" width="14" height="11"><path d="M1 6C2.5 1.5 10.5 .5 13 4.5C11.5 9.5 3 10 1 6z" fill="#d8d8d8" stroke="#555" stroke-width=".7"/><circle cx="6.8" cy="5.3" r="2.4" fill="#2a2a2a"/><circle cx="6.2" cy="4.6" r=".8" fill="#ccc"/></svg>
<div class="a" style="left:872px;top:415px;width:15px;height:13px;background:#fff;border:1px solid #222"></div>
<div class="a" style="left:891px;top:415px;color:#b0b0b0;font-size:11px;line-height:12px;letter-spacing:1.2px">&lt;...</div>
<svg class="a" style="left:946px;top:414px" width="14" height="14"><circle cx="7" cy="7" r="5.6" fill="#888" stroke="#bbb" stroke-width="1.4"/><circle cx="7" cy="7" r="2.2" fill="#333"/></svg>
<div class="a" style="left:960px;top:417px;width:8px;height:8px;background:#5b73c8;border:1.5px solid #20306a"></div>
<div class="a" style="left:799px;top:428px;width:173px;height:1px;background:#3d3d3d"></div>
<svg class="a" style="left:802px;top:432px" width="14" height="11"><path d="M1 6C2.5 1.5 10.5 .5 13 4.5C11.5 9.5 3 10 1 6z" fill="#d8d8d8" stroke="#555" stroke-width=".7"/><circle cx="6.8" cy="5.3" r="2.4" fill="#2a2a2a"/><circle cx="6.2" cy="4.6" r=".8" fill="#ccc"/></svg>
<div class="a" style="left:872px;top:431px;width:15px;height:13px;background:#fff;border:1px solid #222"></div>
<div class="a" style="left:891px;top:431px;color:#b0b0b0;font-size:11px;line-height:12px;letter-spacing:1.2px">&lt;...</div>
<svg class="a" style="left:946px;top:430px" width="14" height="14"><circle cx="7" cy="7" r="5.6" fill="#888" stroke="#bbb" stroke-width="1.4"/><circle cx="7" cy="7" r="2.2" fill="#333"/></svg>
<div class="a" style="left:960px;top:433px;width:8px;height:8px;background:#5b73c8;border:1.5px solid #20306a"></div>
<div class="a" style="left:799px;top:445px;width:173px;height:1px;background:#3d3d3d"></div>
<svg class="a" style="left:802px;top:449px" width="14" height="11"><path d="M1 6C2.5 1.5 10.5 .5 13 4.5C11.5 9.5 3 10 1 6z" fill="#d8d8d8" stroke="#555" stroke-width=".7"/><circle cx="6.8" cy="5.3" r="2.4" fill="#2a2a2a"/><circle cx="6.2" cy="4.6" r=".8" fill="#ccc"/></svg>
<div class="a" style="left:872px;top:448px;width:15px;height:13px;background:#fff;border:1px solid #222"></div>
<div class="a" style="left:891px;top:448px;color:#b0b0b0;font-size:11px;line-height:12px;letter-spacing:1.2px">&lt;...</div>
<svg class="a" style="left:946px;top:447px" width="14" height="14"><circle cx="7" cy="7" r="5.6" fill="#888" stroke="#bbb" stroke-width="1.4"/><circle cx="7" cy="7" r="2.2" fill="#333"/></svg>
<div class="a" style="left:960px;top:450px;width:8px;height:8px;background:#5b73c8;border:1.5px solid #20306a"></div>
<div class="a" style="left:799px;top:462px;width:173px;height:1px;background:#3d3d3d"></div>
<svg class="a" style="left:802px;top:466px" width="14" height="11"><path d="M1 6C2.5 1.5 10.5 .5 13 4.5C11.5 9.5 3 10 1 6z" fill="#d8d8d8" stroke="#555" stroke-width=".7"/><circle cx="6.8" cy="5.3" r="2.4" fill="#2a2a2a"/><circle cx="6.2" cy="4.6" r=".8" fill="#ccc"/></svg>
<div class="a" style="left:872px;top:465px;width:15px;height:13px;background:#fff;border:1px solid #222"></div>
<div class="a" style="left:891px;top:465px;color:#b0b0b0;font-size:11px;line-height:12px;letter-spacing:1.2px">&lt;...</div>
<svg class="a" style="left:946px;top:464px" width="14" height="14"><circle cx="7" cy="7" r="5.6" fill="#888" stroke="#bbb" stroke-width="1.4"/><circle cx="7" cy="7" r="2.2" fill="#333"/></svg>
<div class="a" style="left:960px;top:467px;width:8px;height:8px;background:#5b73c8;border:1.5px solid #20306a"></div>
<div class="a" style="left:817px;top:320px;width:1px;height:150px;background:#444"></div>
<div class="a" style="left:822px;top:320px;width:1px;height:150px;background:#4a4a4a"></div>
<div class="a" style="left:834px;top:320px;width:6px;height:150px;background:linear-gradient(90deg,#2a4580,#8aacE6 50%,#2a4580)"></div>
<div class="a" style="left:944px;top:320px;width:1px;height:150px;background:#444"></div>
<div class="a" style="left:972px;top:320px;width:13px;height:151px;background:#393939"></div>
<svg class="a" style="left:974px;top:326px" width="9" height="6"><path d="M4.5 0.5L8.5 5.5H0.5z" fill="#eee"/></svg>
<div class="a" style="left:974px;top:392px;width:9px;height:12px;background:#a9a9a9"></div>
<div class="a" style="left:974px;top:442px;width:9px;height:12px;background:#a9a9a9"></div>
<div class="a" style="left:796px;top:470px;width:192px;height:14px;background:#3a3a3a"></div>
<div class="a" style="left:797px;top:470px;width:34px;height:13px;background:#474747"></div>
<div class="a" style="left:832px;top:470px;width:40px;height:13px;background:#424242"></div>
<svg class="a" style="left:799px;top:473px" width="5" height="8"><path d="M2.5 0.5L4.5 3H0.5zM2.5 7.5L4.5 5H0.5z" fill="#ccc"/></svg>
<div class="a" style="left:806px;top:472px;color:#d6d6d6;width:22px;height:10px"><svg class="a" style="left:0px;top:0" width="10" height="10"><use href="#g5"/></svg><svg class="a" style="left:11px;top:0" width="10" height="10"><use href="#g6"/></svg></div>

<div class="a" style="left:836px;top:472px;color:#a8a8a8;width:33px;height:10px"><svg class="a" style="left:0.0px;top:0" width="9" height="9"><use href="#g2"/></svg><svg class="a" style="left:9.5px;top:0" width="9" height="9"><use href="#g6"/></svg><svg class="a" style="left:19.0px;top:0" width="9" height="9"><use href="#g4"/></svg></div>

<div id="status" class="a"></div>
<div id="taskbar" class="a"></div>

<!-- canvas vscroll thumb -->
<div class="a" style="left:782px;top:250px;width:12px;height:13px;background:#a9a9a9;border:1px solid #262626"></div>
<div class="a" style="left:784px;top:46px;width:0;height:0;border-left:4px solid transparent;border-right:4px solid transparent;border-bottom:5px solid #ddd"></div>
<!-- status bar -->
<div class="a" style="left:61px;top:471px;width:364px;height:13px;background:#4d4d4d"></div>
<div class="a" style="left:425px;top:471px;width:15px;height:13px;background:#3a3a3a"></div>
<div class="a" style="left:440px;top:471px;width:15px;height:13px;background:#2c2c2c"></div>
<div class="a" style="left:455px;top:471px;width:328px;height:13px;background:#3a3a3a"></div>
<div class="a" style="left:783px;top:471px;width:11px;height:13px;background:#444"></div>
<div class="a" style="left:430px;top:474px;width:0;height:0;border-top:3.5px solid transparent;border-bottom:3.5px solid transparent;border-left:4px solid #ddd"></div>
<div class="a" style="left:445px;top:474px;width:0;height:0;border-top:3.5px solid transparent;border-bottom:3.5px solid transparent;border-right:4px solid #eee"></div>
<div class="a" style="left:771px;top:473px;width:0;height:0;border-top:4px solid transparent;border-bottom:4px solid transparent;border-left:5px solid #eee"></div>
<div class="a" style="left:605px;top:471px;width:12px;height:12px;background:#b0b0b0;border:1px solid #555"></div>
<div class="a" style="left:65px;top:473px;width:16px;height:8px;border:1px solid #6e6e6e;color:#777;font-size:7px;line-height:7px">10%</div>
<svg class="a" style="left:89px;top:473px" width="12" height="9"><rect x="1" y="1.5" width="7" height="6.5" fill="none" stroke="#ddd" stroke-width="1.2"/><path d="M4 6l6-4M7 1.5h3.5v3" stroke="#eee" stroke-width="1.3" fill="none"/></svg>
<div class="a" style="left:110px;top:472px;width:33px;height:11px;background:#b3b3b3;color:#111;font-size:9px;line-height:11px;padding-left:2px">81%</div>
<div class="a" style="left:143px;top:472px;width:11px;height:11px;background:#3e3e3e"><div class="a tri" style="left:2px;top:4px;border-top-color:#fff"></div></div>
<svg class="a" style="left:161px;top:473px" width="22" height="9"><path d="M1 1v7M3 4.5L7 1v7zM17 4.5L20 1v7z" fill="#6a6a6a" stroke="#6a6a6a" stroke-width="1"/></svg>
<div class="a" style="left:189px;top:472px;width:32px;height:11px;background:#b3b3b3;color:#111;font-size:9px;line-height:11px;padding-left:2px">1</div>
<div class="a" style="left:221px;top:472px;width:12px;height:11px;background:#3e3e3e"><div class="a tri" style="left:3px;top:4px;border-top-color:#fff"></div></div>
<svg class="a" style="left:241px;top:473px" width="22" height="9"><path d="M2 1v7l4-3.5zM13 1v7l4-3.5zM19 1v7" fill="#666" stroke="#666" stroke-width="1"/></svg>
<div class="a" style="left:337px;top:473px;color:#e6e6e6;width:22px;height:10px"><svg class="a" style="left:0;top:0" width="10" height="10"><use href="#g5"/></svg><svg class="a" style="left:11px;top:0" width="10" height="10"><use href="#g2"/></svg></div>

<!-- taskbar -->
<div class="a" style="left:0;top:482px;width:988px;height:2px;background:#262626"></div><div class="a" style="left:0;top:484px;width:988px;height:1px;background:#1d2a3c"></div><div class="a" style="left:0;top:485px;width:988px;height:1px;background:#3e5068"></div>
<div class="a" style="left:0;top:486px;width:988px;height:10px;background:linear-gradient(90deg,#061634,#071b3e 60%,#0a2450)"></div>
<!-- floating sogou glyph -->
<svg class="a" style="left:786px;top:459px" width="30" height="18"><circle cx="5" cy="9" r="1.4" fill="#ddd"/><path d="M10 3.5c0 4 1 8 4 10c3 1.5 6-.5 6-2.5c0-1.5-1.5-2.5-3-2M21 10.5c2-.5 4-.5 5 1.5" stroke="#f2f2f2" stroke-width="2.8" fill="none" stroke-linecap="round"/></svg>
<!-- IME bar -->
<div class="a" style="left:886px;top:477px;width:114px;height:19px;background:#f4f6f8"></div>
<svg class="a" style="left:868px;top:473px" width="24" height="23"><path d="M5 2h16l-2 19H2z" fill="#3fc23f" stroke="#2a9a2a" stroke-width="1"/><path d="M16 7c-3-2-9-1-8 2s8 2 7 6-7 3-9 1" stroke="#fff" stroke-width="3.2" fill="none" stroke-linecap="round"/></svg>
<svg class="a" style="left:895px;top:480px" width="100" height="14">
 <path d="M1 1.5h11M5 1.5l-1 10M3 6h7.5v6M0.5 12h12" stroke="#333" stroke-width="1.6" fill="none"/>
 <path d="M28 1.5c2 3 1 8-4 10c-1 .5-2.5.5-3.5 0c2 2 6 2.5 8.5 0c3-3 2.5-8-1-10z" fill="#2c2c2c"/>
 <circle cx="38" cy="5" r="1.6" fill="#444"/><path d="M43 7c1 1 1 3-1 4" stroke="#333" stroke-width="1.8" fill="none"/>
 <rect x="53.5" y="2.5" width="12" height="9" fill="none" stroke="#333" stroke-width="1.4"/><path d="M56 5h1M58 5h1M60 5h1M62 5h1M56 8h7" stroke="#333" stroke-width="1"/>
 <circle cx="76" cy="4" r="2.5" fill="#b9c9c9"/><path d="M71.5 13c0-4 2-6 4.5-6s4.5 2 4.5 6z" fill="#b9c9c9"/>
 <path d="M88.5 12.5l6-6" stroke="#333" stroke-width="2.4" stroke-linecap="round"/><path d="M93 7.5c-1-3 1-6.5 4.5-6l-2.2 2.3.6 1.8 1.8.6 2.3-2.2c.5 3.5-3 5.5-6 4.5z" fill="#333"/>
</svg>

</body></html>
